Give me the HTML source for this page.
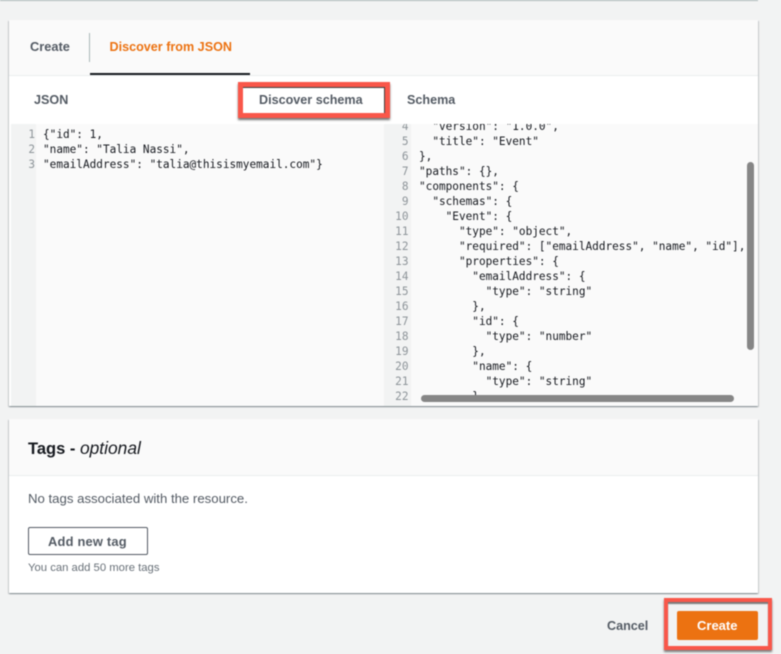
<!DOCTYPE html>
<html>
<head>
<meta charset="utf-8">
<style>
html,body{margin:0;padding:0;width:781px;height:654px;overflow:hidden;background:#f2f3f3;}
body{position:relative;font-family:"Liberation Sans",sans-serif;color:#545b64;}
.a{position:absolute;box-sizing:border-box;}
.t{position:absolute;white-space:nowrap;line-height:16px;}
.b{font-weight:bold;}
.code{position:absolute;font-family:"DejaVu Sans Mono","Liberation Mono",monospace;font-size:11.07px;color:#16191f;white-space:pre;margin:0;}
.nums{position:absolute;font-family:"DejaVu Sans Mono","Liberation Mono",monospace;font-size:11.07px;color:#8d9499;white-space:pre;text-align:right;margin:0;}
#root{position:absolute;left:0;top:0;width:781px;height:654px;filter:blur(0.45px);}
</style>
</head>
<body>
<div id="root">
<div class="a" style="left:0;top:0;width:758px;height:1px;background:#aab7b8;"></div>

<!-- main panel -->
<div class="a" style="left:9px;top:20px;width:749px;height:386px;background:#fff;box-shadow:0 1px 1px 0 rgba(0,28,36,.3),1px 1px 1px 0 rgba(0,28,36,.15),-1px 1px 1px 0 rgba(0,28,36,.15);overflow:hidden;">
  <div class="a" style="left:0;top:0;width:749px;height:56px;background:#fafafa;border-bottom:1px solid #eaeded;"></div>
  <div class="a" style="left:79.5px;top:13px;width:1px;height:29px;background:#aab7b8;"></div>
  <div class="a" style="left:81px;top:53px;width:160px;height:2px;background:#16191f;"></div>
  <!-- editors -->
  <div class="a" style="left:2px;top:104px;width:373px;height:282px;background:#fafafa;overflow:hidden;">
    <div class="a" style="left:0;top:0;width:25px;height:282px;background:#f2f3f3;"></div>
    <pre class="nums" style="left:0;top:3px;width:24px;line-height:15px;">1
2
3</pre>
    <pre class="code" style="left:32px;top:3px;line-height:15px;">{"id": 1,
"name": "Talia Nassi",
"emailAddress": "talia@thisismyemail.com"}</pre>
  </div>
  <div class="a" style="left:375px;top:104px;width:374px;height:282px;background:#fafafa;overflow:hidden;">
    <div class="a" style="left:0;top:0;width:27px;height:282px;background:#f2f3f3;"></div>
    <pre class="nums" style="left:0;top:-5px;width:24.5px;line-height:15px;">4
5
6
7
8
9
10
11
12
13
14
15
16
17
18
19
20
21
22</pre>
    <pre class="code" style="left:35px;top:-5px;line-height:15px;">  "version": "1.0.0",
  "title": "Event"
},
"paths": {},
"components": {
  "schemas": {
    "Event": {
      "type": "object",
      "required": ["emailAddress", "name", "id"],
      "properties": {
        "emailAddress": {
          "type": "string"
        },
        "id": {
          "type": "number"
        },
        "name": {
          "type": "string"
        }</pre>
    <div class="a" style="left:363px;top:38px;width:7px;height:188px;border-radius:4px;background:#868686;"></div>
    <div class="a" style="left:37px;top:271px;width:313px;height:7px;border-radius:4px;background:#868686;"></div>
  </div>
</div>

<div class="t b" style="left:30px;top:39px;font-size:12.8px;">Create</div>
<div class="t b" style="left:109.5px;top:39px;font-size:12.6px;color:#ec7211;">Discover from JSON</div>
<div class="t b" style="left:34px;top:92px;font-size:12.6px;">JSON</div>
<div class="t b" style="left:259px;top:92px;font-size:12.6px;">Discover schema</div>
<div class="t b" style="left:407px;top:92px;font-size:12.6px;">Schema</div>

<!-- discover highlight -->
<div class="a" style="left:238px;top:82px;width:152px;height:36px;border:5px solid #f9574a;box-shadow:0 2px 2px rgba(0,0,0,.55), inset -1px 1px 0 rgba(0,0,0,.75);"></div>

<!-- tags panel -->
<div class="a" style="left:9px;top:419px;width:749px;height:174px;background:#fff;box-shadow:0 1px 1px 0 rgba(0,28,36,.3),1px 1px 1px 0 rgba(0,28,36,.15),-1px 1px 1px 0 rgba(0,28,36,.15);">
  <div class="a" style="left:0;top:0;width:749px;height:57px;background:#fafafa;border-bottom:1px solid #eaeded;"></div>
</div>
<div class="t" style="left:28px;top:439px;font-size:16.5px;line-height:18px;color:#16191f;"><b>Tags -</b> <i style="font-size:17.4px;">optional</i></div>
<div class="t" style="left:28px;top:491px;font-size:13.2px;">No tags associated with the resource.</div>
<div class="a" style="left:28px;top:527px;width:120px;height:28px;border:1px solid #545b64;border-radius:2px;background:#fff;"></div>
<div class="t b" style="left:48px;top:534px;font-size:12.9px;letter-spacing:.2px;">Add new tag</div>
<div class="t" style="left:28px;top:560px;font-size:11.3px;color:#687078;">You can add 50 more tags</div>

<!-- footer -->
<div class="t b" style="left:607px;top:618px;font-size:12.6px;">Cancel</div>
<div class="a" style="left:664px;top:598px;width:108px;height:52px;border:4px solid #f9574a;box-shadow:0 2px 2px rgba(0,0,0,.5), inset 0 2px 1px rgba(0,0,0,.5);"></div>
<div class="a" style="left:677px;top:611px;width:81px;height:29px;background:#ec7211;border-radius:2px;"></div>
<div class="t b" style="left:697px;top:618px;font-size:13px;color:#fff;">Create</div>
</div>
</body>
</html>
